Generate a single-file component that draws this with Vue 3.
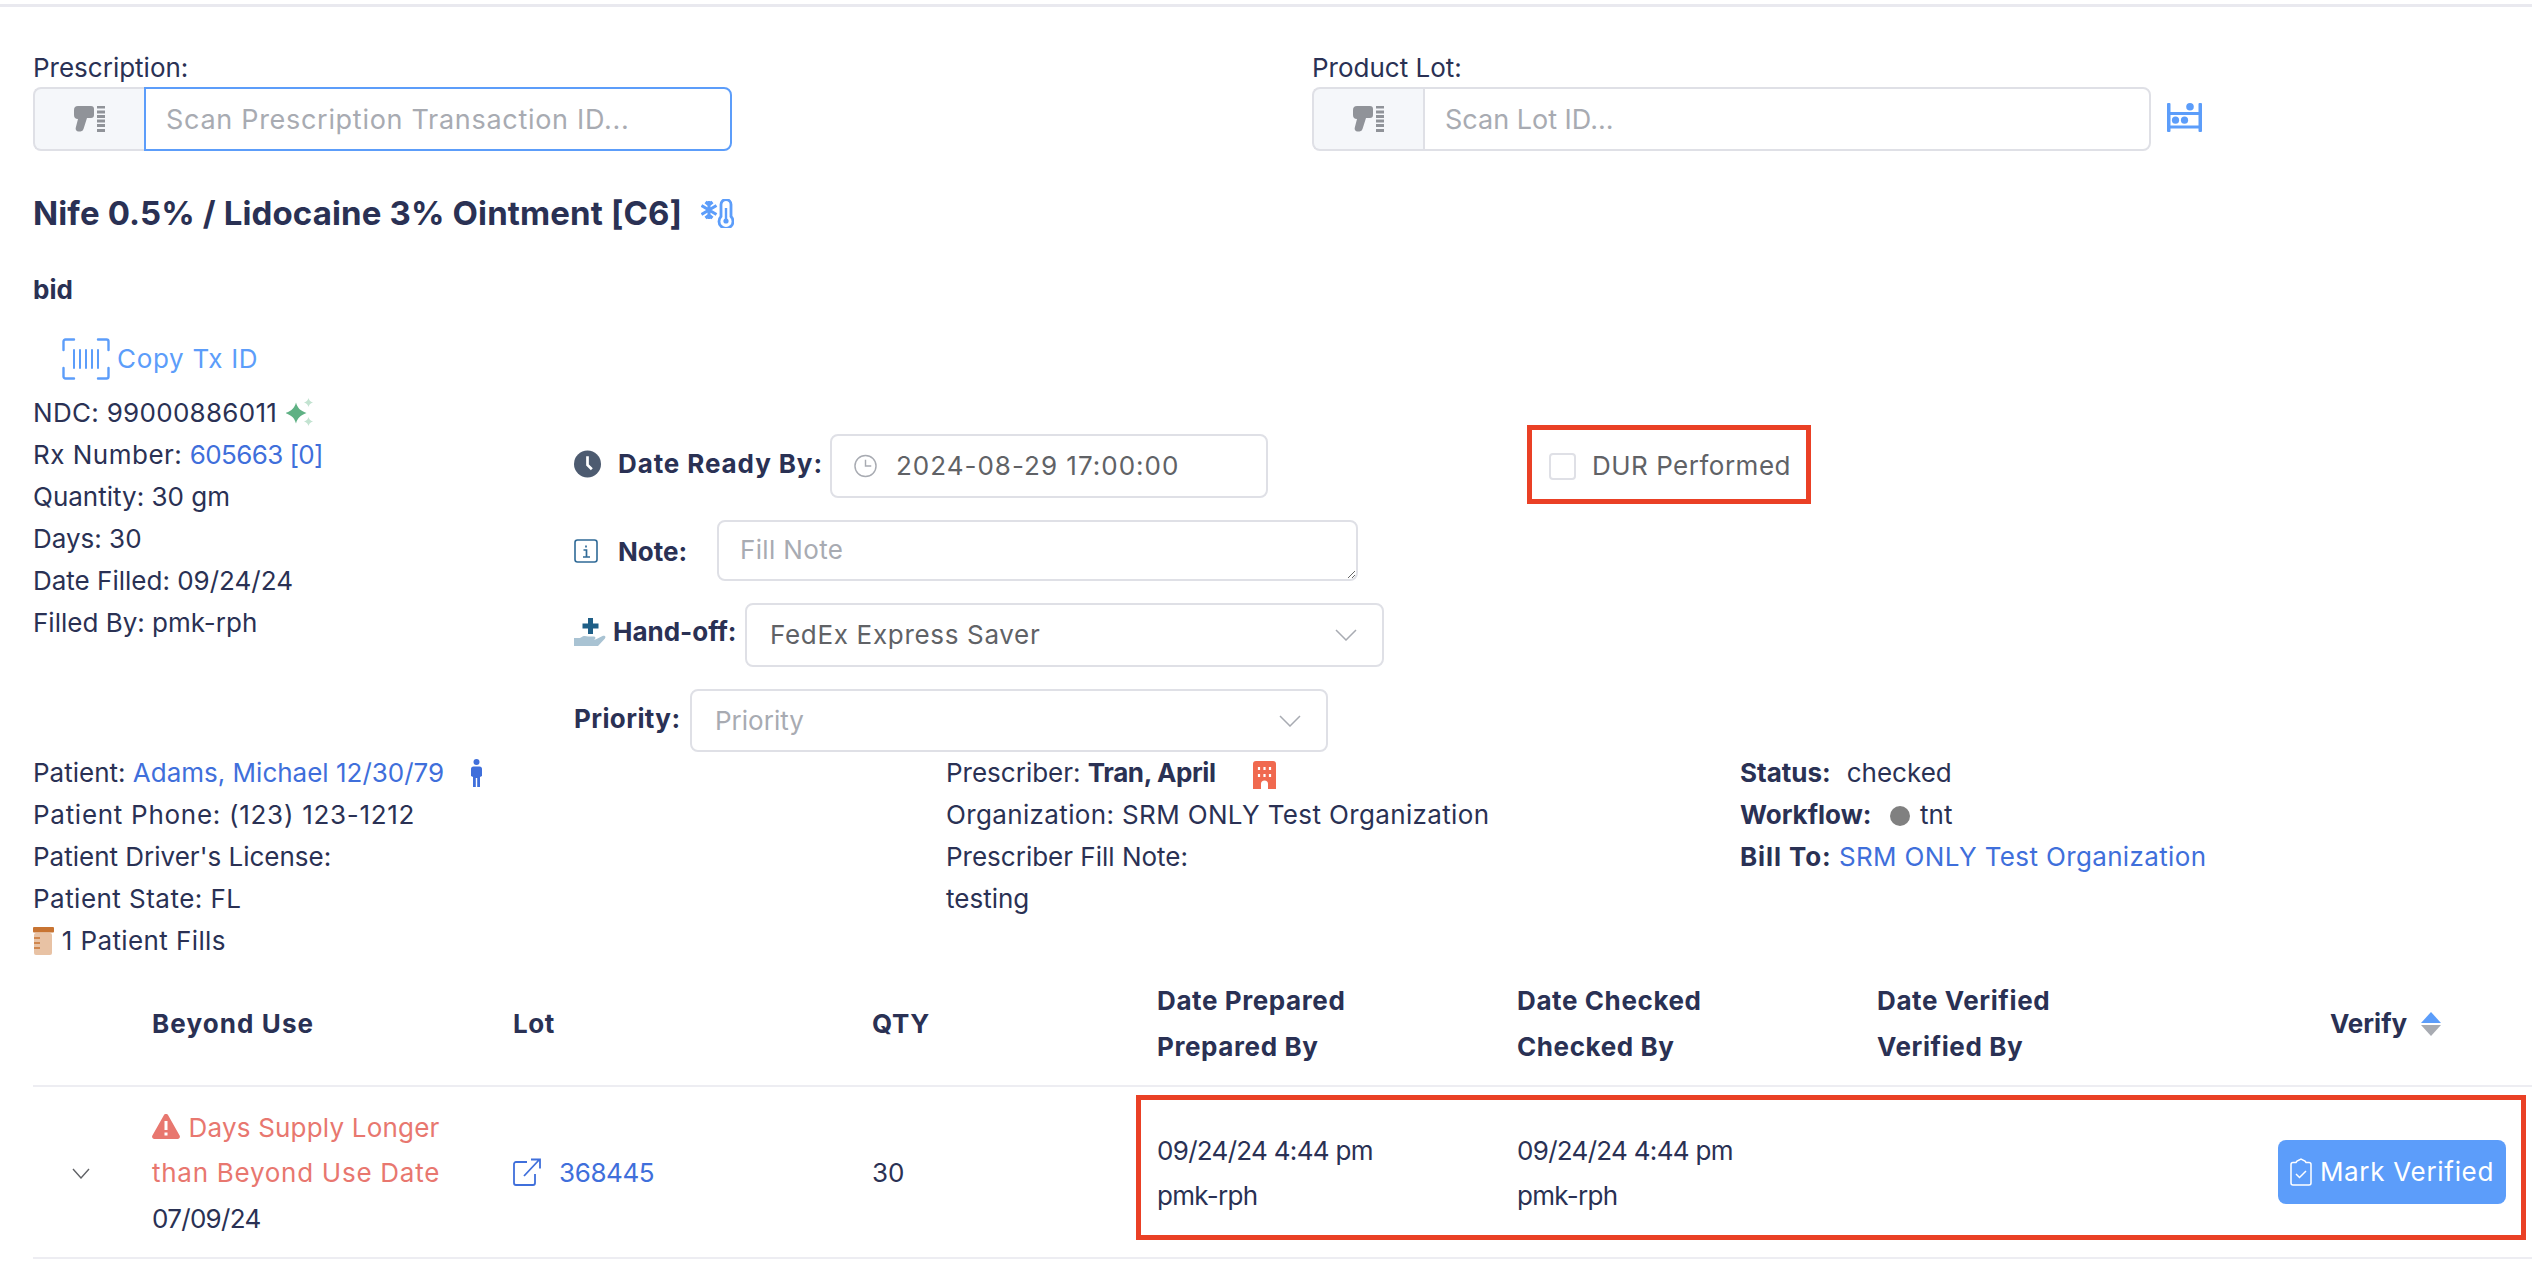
<template>
  <div class="page">
    <div class="scan-row">
      <div class="scan-col scan-rx">
        <div class="scan-label">Prescription:</div>
        <div class="scan-group">
          <span class="addon">
            <svg class="scanner" viewBox="0 0 32 26"><path d="M4 0h13a3 3 0 0 1 3 3v6a3 3 0 0 1-3 3h-4L9.500 23a3.200 3.200 0 0 1-3 2.500H4.500a3 3 0 0 1-2.700-4L4 13a4 4 0 0 1-4-4V4a4 4 0 0 1 4-4z" fill="#909399"/><path d="M23 1h8M23 6h8M23 10.500h8M23 15h8M23 19.500h8M23 24.500h8" stroke="#909399" stroke-width="3"/></svg>
          </span>
          <input class="scan-input focused rx-input" placeholder="Scan Prescription Transaction ID..." />
        </div>
      </div>
      <div class="scan-col scan-lot">
        <div class="scan-label">Product Lot:</div>
        <div class="lot-line">
          <div class="scan-group">
            <span class="addon">
              <svg class="scanner" viewBox="0 0 32 26"><path d="M4 0h13a3 3 0 0 1 3 3v6a3 3 0 0 1-3 3h-4L9.500 23a3.200 3.200 0 0 1-3 2.500H4.500a3 3 0 0 1-2.700-4L4 13a4 4 0 0 1-4-4V4a4 4 0 0 1 4-4z" fill="#909399"/><path d="M23 1h8M23 6h8M23 10.500h8M23 15h8M23 19.500h8M23 24.500h8" stroke="#909399" stroke-width="3"/></svg>
            </span>
            <input class="scan-input" placeholder="Scan Lot ID..." />
          </div>
          <svg class="shelf" viewBox="0 0 35 29" fill="#5c9dfa">
            <rect x="0" y="0" width="3.500" height="29" rx="1" />
            <rect x="31.500" y="0" width="3.500" height="29" rx="1" />
            <rect x="0" y="9" width="35" height="3" />
            <rect x="0" y="22.500" width="35" height="3" />
            <circle cx="23" cy="3.800" r="3.800" />
            <circle cx="8.500" cy="17.200" r="3.600" />
            <circle cx="17.500" cy="17.200" r="3.600" />
          </svg>
        </div>
      </div>
    </div>

    <h1 class="drug-title">
      Nife 0.5% / Lidocaine 3% Ointment [C6]
      <svg class="cold" viewBox="0 0 33 29" fill="none" stroke="#5c9dfa">
        <path d="M8 2v18M.5 6.500l15 9M15.500 6.500l-15 9M4.500 3l3.500 3 3.500-3M4.500 19l3.500-3 3.500 3" stroke-width="3" />
        <path d="M20 17.500V5.500a5 5 0 0 1 10 0v12a7 7 0 1 1-10 0z" stroke-width="2.800" />
        <path d="M25 9v12" stroke-width="2.400" />
        <circle cx="25" cy="22" r="2.600" fill="#5c9dfa" stroke="none" />
      </svg>
    </h1>
    <div class="sig">bid</div>

    <div class="detail-row">
      <div class="rx-col">
        <a class="copy-tx">
          <svg class="tx-icon" viewBox="0 0 48 42" fill="none" stroke="#5c9dfa" stroke-width="2.400" stroke-linecap="round">
            <path d="M12 1.500H3.500a2 2 0 0 0-2 2V12M36 1.500h8.500a2 2 0 0 1 2 2V12M12 40.500H3.500a2 2 0 0 1-2-2V30M36 40.500h8.500a2 2 0 0 0 2-2V30" />
            <path d="M12 12v18M18 12v18M24 12v18M30 12v18M36 12v18" stroke-width="2" />
          </svg>
          Copy Tx ID
        </a>
        <div class="line ndc">
          NDC: 99000886011
          <svg class="sparkle" viewBox="0 0 28 28">
            <path d="M10 4.500c1.500 5.500 4 8 10.500 10.500-6.500 2.500-9 5-10.500 10.500C8.500 20 6 17.500-.5 15 6 12.500 8.500 10 10 4.500z" fill="#5fb184" />
            <path d="M22.500 0c.6 2.200 1.700 3.400 4.500 4.500-2.800 1.100-3.900 2.300-4.500 4.500-.6-2.200-1.700-3.400-4.500-4.500 2.800-1.100 3.900-2.300 4.500-4.500zM22.500 19c.6 2.200 1.700 3.400 4.500 4.500-2.800 1.100-3.900 2.300-4.500 4.500-.6-2.200-1.700-3.400-4.500-4.500 2.800-1.100 3.900-2.300 4.500-4.500z" fill="#c3e3d1" />
          </svg>
        </div>
        <div class="line"><span class="rx-label">Rx Number:</span> <a class="link rx-no">605663 [0]</a></div>
        <div class="line">Quantity: 30 gm</div>
        <div class="line">Days: 30</div>
        <div class="line">Date Filled: 09/24/24</div>
        <div class="line">Filled By: pmk-rph</div>
      </div>

      <div class="form-col">
        <div class="form-row">
          <svg class="ic-clock" viewBox="0 0 28 28"><circle cx="14" cy="14" r="14" fill="#4d5b70" /><path d="M14 6v9l4.500 4.500" fill="none" stroke="#fff" stroke-width="2.800" /></svg>
          <label class="form-label date-label">Date Ready By:</label>
          <div class="box date-box">
            <svg class="ic-time" viewBox="0 0 24 24" fill="none" stroke="#a8abb2" stroke-width="1.500"><circle cx="12" cy="12" r="11" /><path d="M12 5.500V12h6" /></svg>
            <span class="date-val">2024-08-29 17:00:00</span>
          </div>
          <label class="dur">
            <span class="check"></span>
            <span class="dur-text">DUR Performed</span>
            <span class="callout dur-callout"></span>
          </label>
        </div>
        <div class="form-row">
          <svg class="ic-info" viewBox="0 0 24 24"><rect x="1" y="1" width="22" height="22" rx="2.500" fill="none" stroke="#2f6a97" stroke-width="1.600" /><path d="M12 6.500v2M9.500 11H12.500v7M9 18h7" fill="none" stroke="#2f6a97" stroke-width="1.700" /></svg>
          <label class="form-label note-label">Note:</label>
          <textarea class="note" placeholder="Fill Note"></textarea>
        </div>
        <div class="form-row">
          <svg class="ic-hand" viewBox="0 0 34 28">
            <path d="M14 0h5v5.500h5.500v5H19V16h-5v-5.500H8.500v-5H14z" fill="#1f5f87" />
            <path d="M0 20h6c3-2.500 5-2.500 8-1.500h6c2 0 2 3-.5 3h-6 8l7-3.500c2.500-1 4 1 2 3L24 28H0z" fill="#a9c3d3" />
          </svg>
          <label class="form-label hand-label">Hand-off:</label>
          <div class="box select hand-select">
            <span class="hand-val">FedEx Express Saver</span>
            <svg class="chev" viewBox="0 0 22 12" fill="none" stroke="#a8abb2" stroke-width="1.500"><path d="M1 1l10 10L21 1" /></svg>
          </div>
        </div>
        <div class="form-row">
          <label class="form-label prio-label">Priority:</label>
          <div class="box select prio-select">
            <span class="placeholder">Priority</span>
            <svg class="chev" viewBox="0 0 22 12" fill="none" stroke="#a8abb2" stroke-width="1.500"><path d="M1 1l10 10L21 1" /></svg>
          </div>
        </div>
      </div>
    </div>

    <div class="people">
      <div>
        <div class="line">
          Patient: <a class="link">Adams, Michael 12/30/79</a>
          <svg class="ic-person" viewBox="0 0 11 28" fill="#3f6fdb"><circle cx="5.500" cy="3" r="3" /><path d="M2.500 7.500h6A2.500 2.500 0 0 1 11 10v7l-2 1v10H6.200v-9H4.800v9H2V18l-2-1v-7a2.500 2.500 0 0 1 2.500-2.500z" /></svg>
        </div>
        <div class="line phone">Patient Phone: (123) 123-1212</div>
        <div class="line">Patient Driver's License:</div>
        <div class="line state">Patient State: FL</div>
        <div class="line fills">
          <svg class="ic-bottle" viewBox="0 0 21 28">
            <rect x="1" y="6" width="18" height="22" rx="2" fill="#e8c2a4" />
            <rect x="0" y="0" width="21" height="5.500" rx="1" fill="#c87432" />
            <path d="M1 11h6M1 16h6M1 21h6" stroke="#c87432" stroke-width="1.600" />
          </svg>
          1 Patient Fills
        </div>
      </div>
      <div>
        <div class="line">
          Prescriber: <b class="tight">Tran, April</b>
          <svg class="ic-building" viewBox="0 0 23 28"><path d="M3 0h17a3 3 0 0 1 3 3v25h-8v-5a3.500 3.500 0 0 0-7 0v5H0V3a3 3 0 0 1 3-3z" fill="#f0694f" /><path d="M6 6v3M11.500 6v3M17 6v3M6 13v3M11.500 13v3M17 13v3" stroke="#fff" stroke-width="2.200" /></svg>
        </div>
        <div class="line org">Organization: SRM ONLY Test Organization</div>
        <div class="line">Prescriber Fill Note:</div>
        <div class="line">testing</div>
      </div>
      <div>
        <div class="line"><b>Status:</b><span class="status-val">checked</span></div>
        <div class="line"><b>Workflow:</b> <span class="dot"></span> tnt</div>
        <div class="line"><b class="bill">Bill To:</b> <a class="link org">SRM ONLY Test Organization</a></div>
      </div>
    </div>

    <div class="table">
      <div class="t-head">
        <div></div>
        <div class="beyond">Beyond Use</div>
        <div>Lot</div>
        <div>QTY</div>
        <div>Date Prepared<br />Prepared By</div>
        <div>Date Checked<br />Checked By</div>
        <div>Date Verified<br />Verified By</div>
        <div class="verify-head">
          Verify
          <svg class="sort" viewBox="0 0 20 24"><path d="M10 0l10 11H0z" fill="#5c9dfa" /><path d="M10 24L0 13h20z" fill="#a8abb2" /></svg>
        </div>
      </div>
      <div class="t-row">
        <div class="expand">
          <svg class="row-chev" viewBox="0 0 18 11" fill="none" stroke="#606266" stroke-width="1.400"><path d="M1 1l8 9 8-9" /></svg>
        </div>
        <div>
          <div class="warn">
            <svg class="ic-warn" viewBox="0 0 28 25"><path d="M14 0c1 0 1.800.5 2.300 1.400l11.300 20c.9 1.600-.2 3.600-2 3.600H2.400c-1.800 0-2.900-2-2-3.600l11.300-20C12.200.5 13 0 14 0z" fill="#e8776f" /><path d="M14 7v9M14 18.500v3" stroke="#fff" stroke-width="3" /></svg>
            Days Supply Longer<br /><span class="than">than Beyond Use Date</span>
          </div>
          <span class="stamp">07/09/24</span>
        </div>
        <div class="lot-cell">
          <svg class="ic-ext" viewBox="0 0 28 28" fill="none" stroke="#3f6fdb" stroke-width="1.800"><path d="M14 4H3a2 2 0 0 0-2 2v19a2 2 0 0 0 2 2h17a2 2 0 0 0 2-2v-9" /><path d="M11 18L26 2M18 1.500h9v9" /></svg>
          <a class="link lot-no">368445</a>
        </div>
        <div>30</div>
        <div class="stamp">09/24/24 4:44 pm<br />pmk-rph</div>
        <div class="stamp">09/24/24 4:44 pm<br />pmk-rph</div>
        <div></div>
        <div class="verify-cell">
          <button class="verify-btn">
            <svg class="ic-clip" viewBox="0 0 22 28" fill="none" stroke="#fff" stroke-width="1.500"><path d="M6 4.500H3a2 2 0 0 0-2 2V25a2 2 0 0 0 2 2h16a2 2 0 0 0 2-2V6.500a2 2 0 0 0-2-2h-3l-1-1.500-4-2-4 2z" /><path d="M6 16l3.500 3.500L16 13" /></svg>
            <span class="mark">Mark Verified</span>
          </button>
        </div>
        <span class="callout row-callout"></span>
      </div>
    </div>
  </div>
</template>

<script setup>
</script>

<style>
body {
  background: #fff;
}
</style>

<style scoped>
.page {
  width: 2532px;
  height: 1262px;
  overflow: hidden;
  box-sizing: border-box;
  padding-left: 33px;
  position: relative;
  font-family: Inter, "Liberation Sans", sans-serif;
  font-size: 26px;
  line-height: 42px;
  color: #2a3154;
  background: #fff;
}

.page::before {
  content: "";
  display: block;
  height: 3px;
  margin: 4px 0 0 -33px;
  background: #e9e9ef;
}

.scan-row {
  display: flex;
  padding-top: 41px;
}

.scan-rx { width: 1279px; }

.scan-label {
  line-height: 40px;
  margin-bottom: -1px;
}

.scan-rx .scan-group { width: 699px; }
.scan-lot .scan-group { width: 839px; }

.scan-group {
  display: flex;
  height: 64px;
  box-sizing: border-box;
}

.addon {
  width: 111px;
  flex: none;
  display: flex;
  align-items: center;
  justify-content: center;
  box-sizing: border-box;
  background: #f5f7fa;
  border: 2px solid #dfe0e6;
  border-right: 0;
  border-radius: 8px 0 0 8px;
}

.scanner { width: 32px; height: 26px; }

.scan-input {
  flex: 1;
  min-width: 0;
  box-sizing: border-box;
  border: 2px solid #dfe0e6;
  border-radius: 0 8px 8px 0;
  padding: 2px 20px 0;
  font: inherit;
  font-size: 27px;
  color: #606266;
  outline: none;
}

.scan-input.focused { border-color: #5c9dfa; }
.rx-input { letter-spacing: .7px; }

input::placeholder,
textarea::placeholder,
.placeholder { color: #a8abb2; }

.lot-line {
  display: flex;
  align-items: center;
  gap: 16px;
}

.shelf { width: 35px; height: 29px; margin-top: -3px; }

.drug-title {
  margin: 39px 0 0;
  font-size: 33px;
  letter-spacing: .13px;
  line-height: 46px;
  font-weight: 700;
  display: flex;
  align-items: center;
  gap: 19px;
}

.cold { width: 33px; height: 29px; }

.sig {
  margin-top: 33px;
  font-weight: 700;
}

.detail-row { display: flex; }

.rx-col { width: 541px; flex: none; }

.copy-tx {
  display: flex;
  align-items: center;
  gap: 7px;
  height: 42px;
  margin: 27px 0 12px 29px;
  color: #5c9dfa;
  letter-spacing: .7px;
}

.tx-icon { width: 48px; height: 42px; }

.line {
  height: 42px;
  white-space: nowrap;
}

.line svg { vertical-align: middle; }

.ndc { letter-spacing: .3px; }
.rx-label { letter-spacing: .5px; }
.rx-no { letter-spacing: -.6px; }
.phone { letter-spacing: .72px; }
.state { letter-spacing: .47px; }
.fills { letter-spacing: .4px; }
.org { letter-spacing: .36px; }
.bill { letter-spacing: .9px; }
.tight { letter-spacing: -.4px; }
.status-val { margin-left: 16px; }

.link { color: #3f6fdb; }

.sparkle { width: 28px; height: 28px; margin: -6px 0 0 1px; }

.form-col {
  padding-top: 123px;
  display: flex;
  flex-direction: column;
  gap: 22px;
}

.form-row {
  display: flex;
  align-items: center;
  position: relative;
}

.form-label {
  font-weight: 700;
  flex: none;
  box-sizing: border-box;
}

.ic-clock { width: 27px; height: 28px; margin-top: -4px; }

.date-label {
  width: 212px;
  margin: -4px 0 0 17px;
  letter-spacing: .9px;
}

.box {
  box-sizing: border-box;
  height: 64px;
  display: flex;
  align-items: center;
  border: 2px solid #dfe0e6;
  border-radius: 8px;
  color: #606266;
  background: #fff;
}

.date-box { width: 438px; padding-left: 22px; }
.ic-time { width: 23px; height: 24px; margin-right: 19px; }
.date-val { letter-spacing: 1px; }

.dur {
  display: flex;
  align-items: center;
  margin-left: 281px;
  color: #606266;
  position: relative;
}

.dur-text { letter-spacing: .5px; }

.check {
  width: 27px;
  height: 27px;
  box-sizing: border-box;
  border: 2px solid #dfe0e6;
  border-radius: 4px;
  margin-right: 16px;
}

.callout {
  position: absolute;
  box-sizing: border-box;
  border: 5px solid #ea4025;
  pointer-events: none;
}

.dur-callout {
  left: -22px;
  top: -20px;
  width: 284px;
  height: 79px;
}

.ic-info { width: 24px; height: 24px; }

.note-label {
  width: 99px;
  margin: 2px 0 0 20px;
}

.note {
  width: 641px;
  height: 61px;
  box-sizing: border-box;
  border: 2px solid #dfe0e6;
  border-radius: 8px;
  padding: 8px 21px;
  font: inherit;
  letter-spacing: .35px;
  line-height: 40px;
  color: #606266;
  outline: none;
  resize: vertical;
}

.ic-hand { width: 34px; height: 28px; margin-top: -6px; }

.hand-label {
  width: 132px;
  margin: -6px 0 0 5px;
}

.select { justify-content: space-between; padding: 0 25px 0 23px; }
.hand-select { width: 639px; }
.hand-val { letter-spacing: .68px; }
.prio-select { width: 638px; height: 63px; }

.prio-label {
  width: 116px;
  margin-top: -3px;
  letter-spacing: .4px;
}

.chev { width: 22px; height: 12px; }

.people {
  display: grid;
  grid-template-columns: 913px 794px 1fr;
}

.people b { font-weight: 700; }

.ic-person { width: 11px; height: 28px; margin: -4px 0 0 27px; }
.ic-building { width: 23px; height: 28px; margin-left: 37px; }
.ic-bottle { width: 21px; height: 28px; margin-top: -4px; }

.dot {
  display: inline-block;
  width: 20px;
  height: 20px;
  border-radius: 50%;
  background: #808080;
  vertical-align: -2px;
  margin: 0 3px 0 11px;
}

.t-head,
.t-row {
  display: grid;
  align-items: center;
  border-bottom: 2px solid #ededf2;
  position: relative;
}

.t-head {
  grid-template-columns: 99px 361px 359px 285px 360px 360px 453px 1fr;
  height: 125px;
  box-sizing: border-box;
  font-weight: 700;
  line-height: 46px;
  letter-spacing: .6px;
}

.t-row {
  grid-template-columns: 99px 361px 359px 285px 360px 360px 401px 1fr;
  height: 172px;
  box-sizing: border-box;
  line-height: 45.500px;
}

.t-head > div,
.t-row > div { padding-left: 20px; }

.t-row > div:not(.verify-cell) { padding-top: 2px; }

.beyond { letter-spacing: 1.100px; }

.verify-head {
  display: flex;
  align-items: center;
  gap: 14px;
  letter-spacing: 0;
}

.sort { width: 20px; height: 24px; }

.expand { display: flex; justify-content: flex-start; }
.row-chev { width: 18px; height: 11px; margin-left: 19px; }

.warn { color: #e8776f; letter-spacing: .2px; }
.than { letter-spacing: .73px; }
.ic-warn { width: 28px; height: 25px; margin-right: 1px; vertical-align: -2px; }
.stamp { letter-spacing: -.7px; }

.lot-cell { display: flex; align-items: center; gap: 18px; }
.lot-no { letter-spacing: -.4px; }
.ic-ext { width: 28px; height: 28px; margin-top: -2px; }

.verify-cell { display: flex; }

.verify-btn {
  height: 64px;
  width: 228px;
  display: flex;
  align-items: center;
  justify-content: center;
  gap: 8px;
  padding: 0;
  border: 0;
  border-radius: 8px;
  background: #5c9dfa;
  color: #fff;
  font: inherit;
}

.mark { letter-spacing: .7px; }
.ic-clip { width: 22px; height: 28px; }

.row-callout {
  left: 1103px;
  top: 8px;
  width: 1390px;
  height: 145px;
}
</style>
